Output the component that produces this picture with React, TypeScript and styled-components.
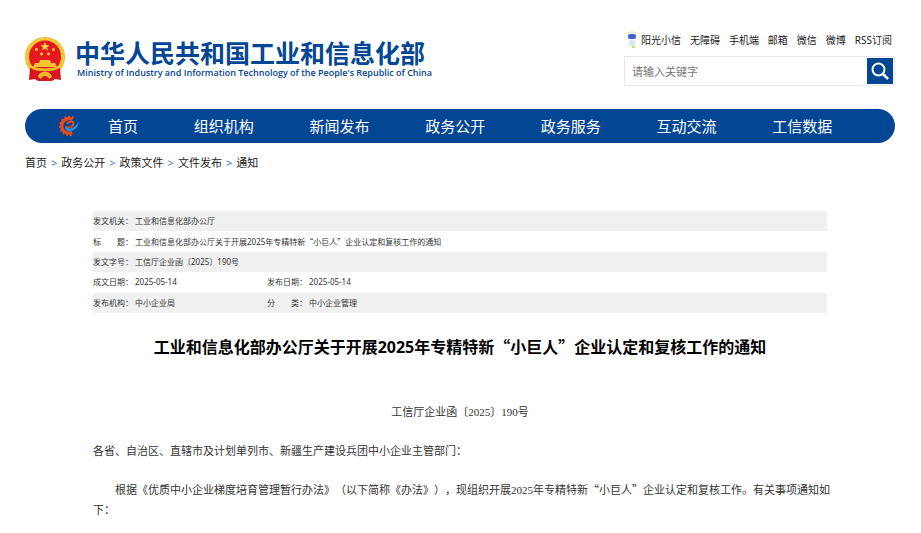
import React from 'react';
import styled, { createGlobalStyle } from 'styled-components';

const BLUE = '#034694';
const SANS = '"Noto Sans", "Noto Sans CJK SC", sans-serif';

const GlobalStyle = createGlobalStyle`
  *, *::before, *::after { box-sizing: border-box; }
  body { margin: 0; background: #fff; color: #222; font-family: ${SANS}; text-spacing-trim: space-all; }
  h1, p { margin: 0; }
  a { color: inherit; text-decoration: none; }
`;

const Page = styled.div`
  padding: 28px 26px 0 25px;
`;

const Header = styled.header`
  display: flex;
  justify-content: space-between;
  align-items: flex-start;
`;

const Brand = styled.a`
  display: flex;
  gap: 10px;
  padding-top: 9px;
  color: ${BLUE};
`;

const BrandText = styled.span`
  display: flex;
  flex-direction: column;
`;

const BrandName = styled.span`
  font-family: "Noto Sans CJK SC", sans-serif;
  font-size: 25px;
  line-height: 30px;
  font-weight: 700;
  white-space: nowrap;
`;

const BrandSub = styled.span`
  padding-left: 2px;
  font-family: "Open Sans", "Noto Sans", sans-serif;
  font-size: 9px;
  line-height: 12px;
  font-weight: 600;
  white-space: nowrap;
`;

const Tools = styled.div`
  width: 271px;
`;

const QuickLinks = styled.nav`
  display: flex;
  justify-content: space-between;
  align-items: center;
  height: 24px;
  padding: 0 3px;
  font-size: 10px;
  line-height: 16px;
  white-space: nowrap;
  a { display: flex; align-items: center; gap: 4px; }
`;

const SearchForm = styled.form`
  display: flex;
  margin-top: 4px;
  height: 30px;
  border: 1px solid #e8e8e8;
  padding: 1px;
`;

const SearchInput = styled.input`
  flex: 1;
  min-width: 0;
  border: 0;
  padding: 0 6px;
  font: 11px ${SANS};
  outline: none;
  &::placeholder { color: #757575; }
`;

const SearchButton = styled.button`
  display: flex;
  align-items: center;
  justify-content: center;
  width: 26px;
  border: 0;
  padding: 0;
  background: ${BLUE};
`;

const NavBar = styled.nav`
  display: flex;
  align-items: center;
  height: 34px;
  margin-top: 23px;
  padding: 0 35px 0 33px;
  border-radius: 17px;
  background: ${BLUE};
`;

const NavList = styled.div`
  flex: 1;
  display: grid;
  grid-template-columns: 86px repeat(6, 1fr);
  justify-items: center;
  color: #fff;
  font-size: 15px;
  line-height: 24px;
`;

const Crumbs = styled.nav`
  display: flex;
  gap: 4px;
  margin-top: 12px;
  font-size: 11px;
  line-height: 16px;
`;

const Sep = styled.span`
  color: #3f7ab8;
`;

const Main = styled.main`
  padding: 0 68px;
`;

const Meta = styled.table`
  width: 100%;
  height: 102px;
  margin-top: 40px;
  border-collapse: collapse;
  font-size: 8px;
  line-height: 12px;
  color: #333;
  tr:nth-child(odd) { background: #f0f0f0; }
  th, td { padding: 0; text-align: left; font-weight: 400; }
`;

const LabelCell = styled.th`
  width: 42px;
`;

const DateCell = styled.td`
  width: 132px;
`;

const LabelText = styled.span`
  display: flex;
`;

const LabelChars = styled.span`
  display: flex;
  justify-content: space-between;
  width: 32px;
`;

const QuoteMark = styled.span`
  font-family: "Noto Sans CJK SC", sans-serif;
  line-height: 1;
`;

const Title = styled.h1`
  margin-top: 22px;
  text-align: center;
  font-size: 16px;
  line-height: 24px;
  font-weight: 700;
  color: #000;
`;

const Body = styled.article`
  margin-top: 43px;
  font-family: "Liberation Serif", "Noto Sans CJK SC", serif;
  font-size: 11px;
  line-height: 20px;
  color: #333;
`;

const DocNumber = styled.p`
  text-align: center;
`;

const Paragraph = styled.p<{ $indent?: boolean }>`
  margin: 19px -6px 0 0;
  text-indent: ${(p) => (p.$indent ? '2em' : '0')};
`;

const Emblem = () => (
  <svg width="40" height="44" viewBox="0 0 40 44" aria-hidden="true">
    <circle cx="20" cy="20" r="20" fill="#edbd2c" />
    <circle cx="20" cy="20" r="18" fill="none" stroke="#f4d149" strokeWidth="1.500" strokeDasharray="4 1" />
    <circle cx="20" cy="19.500" r="16" fill="#e5171f" />
    <path d="M20 5l1.200 3.200h3.400l-2.700 2 1 3.300-2.900-2-2.900 2 1-3.300-2.700-2h3.400z" fill="#fae04a" />
    <g fill="#f6cf3f">
      <circle cx="11.500" cy="12.500" r="1.500" />
      <circle cx="28.500" cy="12.500" r="1.500" />
      <circle cx="16.500" cy="17" r="1.400" />
      <circle cx="23.500" cy="17" r="1.400" />
    </g>
    <path d="M15 23h10l1 3h4l2 4H8l2-4h4z" fill="#f5c632" />
    <path d="M5 31l8 2c4-2 10-2 14 0l8-2 1 12-6-1-3 2H13l-3-2-6 1z" fill="#d9151e" />
    <path d="M7 29c5 3 21 3 26 0v3c-6 3-20 3-26 0z" fill="#efb72e" />
    <path d="M13 40c1-7 13-7 14 0l-3 2c-1-4-7-4-8 0z" fill="#efb72e" />
  </svg>
);

const GearE = () => (
  <svg width="22" height="22" viewBox="0 0 22 22" fill="none" aria-hidden="true">
    <path d="M15.500 3A9 9 0 1 0 15.500 19" stroke="#e8491d" strokeWidth="2.500" strokeDasharray="2 1.600" />
    <path d="M14.500 4.700A7.200 7.200 0 1 0 14 17.400" stroke="#e8491d" strokeWidth="3.200" />
    <path d="M7 12.500c5 .5 8.500-1 8.500-3.700 0-3-4.500-3-6.500 0" stroke="#e8491d" strokeWidth="2" />
    <path d="M8 10c-2 5 1.500 7.200 5.500 6C18 14.600 20.500 11 21 6c-2 4-5 7-9 7.500-2.500.3-4-1-4-3.500z" fill="#2a93d5" />
  </svg>
);

const Mascot = () => (
  <svg width="10" height="18" viewBox="0 0 10 18" aria-hidden="true">
    <path d="M1 1l1 2M5 0v2M9 1L8 3M0 5h1M9 5h1" stroke="#f7d75a" />
    <rect x="1" y="3" width="8" height="5" rx="2" fill="#3e60d3" />
    <path d="M3 9h4l2 5-2 1H3l-2-1z" fill="#d9e6f5" />
    <path d="M5 16h3" stroke="#f4cf55" strokeWidth="2" />
  </svg>
);

const SearchIcon = () => (
  <svg width="18" height="18" viewBox="0 0 18 18" fill="none" stroke="#fff" strokeWidth="2" aria-hidden="true">
    <circle cx="7.500" cy="7.500" r="6" />
    <path d="M12 12l5 5" strokeWidth="2.500" />
  </svg>
);

const quick = ['无障碍', '手机端', '邮箱', '微信', '微博', 'RSS订阅'];
const nav = ['首页', '组织机构', '新闻发布', '政务公开', '政务服务', '互动交流', '工信数据'];
const crumbs = ['首页', '政务公开', '政策文件', '文件发布', '通知'];

const Label = ({ text }: { text: string }) => (
  <LabelCell scope="row">
    <LabelText>
      <LabelChars>{[...text].map((c) => <span key={c}>{c}</span>)}</LabelChars>：
    </LabelText>
  </LabelCell>
);

const Giant = () => (
  <><QuoteMark>“</QuoteMark>小巨人<QuoteMark>”</QuoteMark></>
);

const NoticeTitle = () => (
  <>工业和信息化部办公厅关于开展2025年专精特新<Giant />企业认定和复核工作的通知</>
);

export default function App() {
  return (
    <>
      <GlobalStyle />
      <Page lang="zh-CN">
        <Header>
          <Brand href="#">
            <Emblem />
            <BrandText>
              <BrandName>中华人民共和国工业和信息化部</BrandName>
              <BrandSub>Ministry of Industry and Information Technology of the People's Republic of China</BrandSub>
            </BrandText>
          </Brand>
          <Tools>
            <QuickLinks>
              <a href="#"><Mascot />阳光小信</a>
              {quick.map((q) => <a href="#" key={q}>{q}</a>)}
            </QuickLinks>
            <SearchForm>
              <SearchInput type="text" placeholder="请输入关键字" aria-label="请输入关键字" />
              <SearchButton type="button" aria-label="搜索"><SearchIcon /></SearchButton>
            </SearchForm>
          </Tools>
        </Header>
        <NavBar>
          <GearE />
          <NavList>
            {nav.map((n) => <a href="#" key={n}>{n}</a>)}
          </NavList>
        </NavBar>
        <Crumbs>
          {crumbs.map((c, i) => (
            <React.Fragment key={c}>
              {i > 0 && <Sep>&gt;</Sep>}
              <a href="#">{c}</a>
            </React.Fragment>
          ))}
        </Crumbs>
        <Main>
          <Meta>
            <tbody>
              <tr><Label text="发文机关" /><td colSpan={3}>工业和信息化部办公厅</td></tr>
              <tr><Label text="标题" /><td colSpan={3}><NoticeTitle /></td></tr>
              <tr><Label text="发文字号" /><td colSpan={3}>工信厅企业函〔2025〕190号</td></tr>
              <tr><Label text="成文日期" /><DateCell>2025-05-14</DateCell><Label text="发布日期" /><td>2025-05-14</td></tr>
              <tr><Label text="发布机构" /><DateCell>中小企业局</DateCell><Label text="分类" /><td>中小企业管理</td></tr>
            </tbody>
          </Meta>
          <Title><NoticeTitle /></Title>
          <Body>
            <DocNumber>工信厅企业函〔2025〕190号</DocNumber>
            <Paragraph>各省、自治区、直辖市及计划单列市、新疆生产建设兵团中小企业主管部门：</Paragraph>
            <Paragraph $indent>根据《优质中小企业梯度培育管理暂行办法》（以下简称《办法》），现组织开展2025年专精特新<Giant />企业认定和复核工作。有关事项通知如下：</Paragraph>
          </Body>
        </Main>
      </Page>
    </>
  );
}
